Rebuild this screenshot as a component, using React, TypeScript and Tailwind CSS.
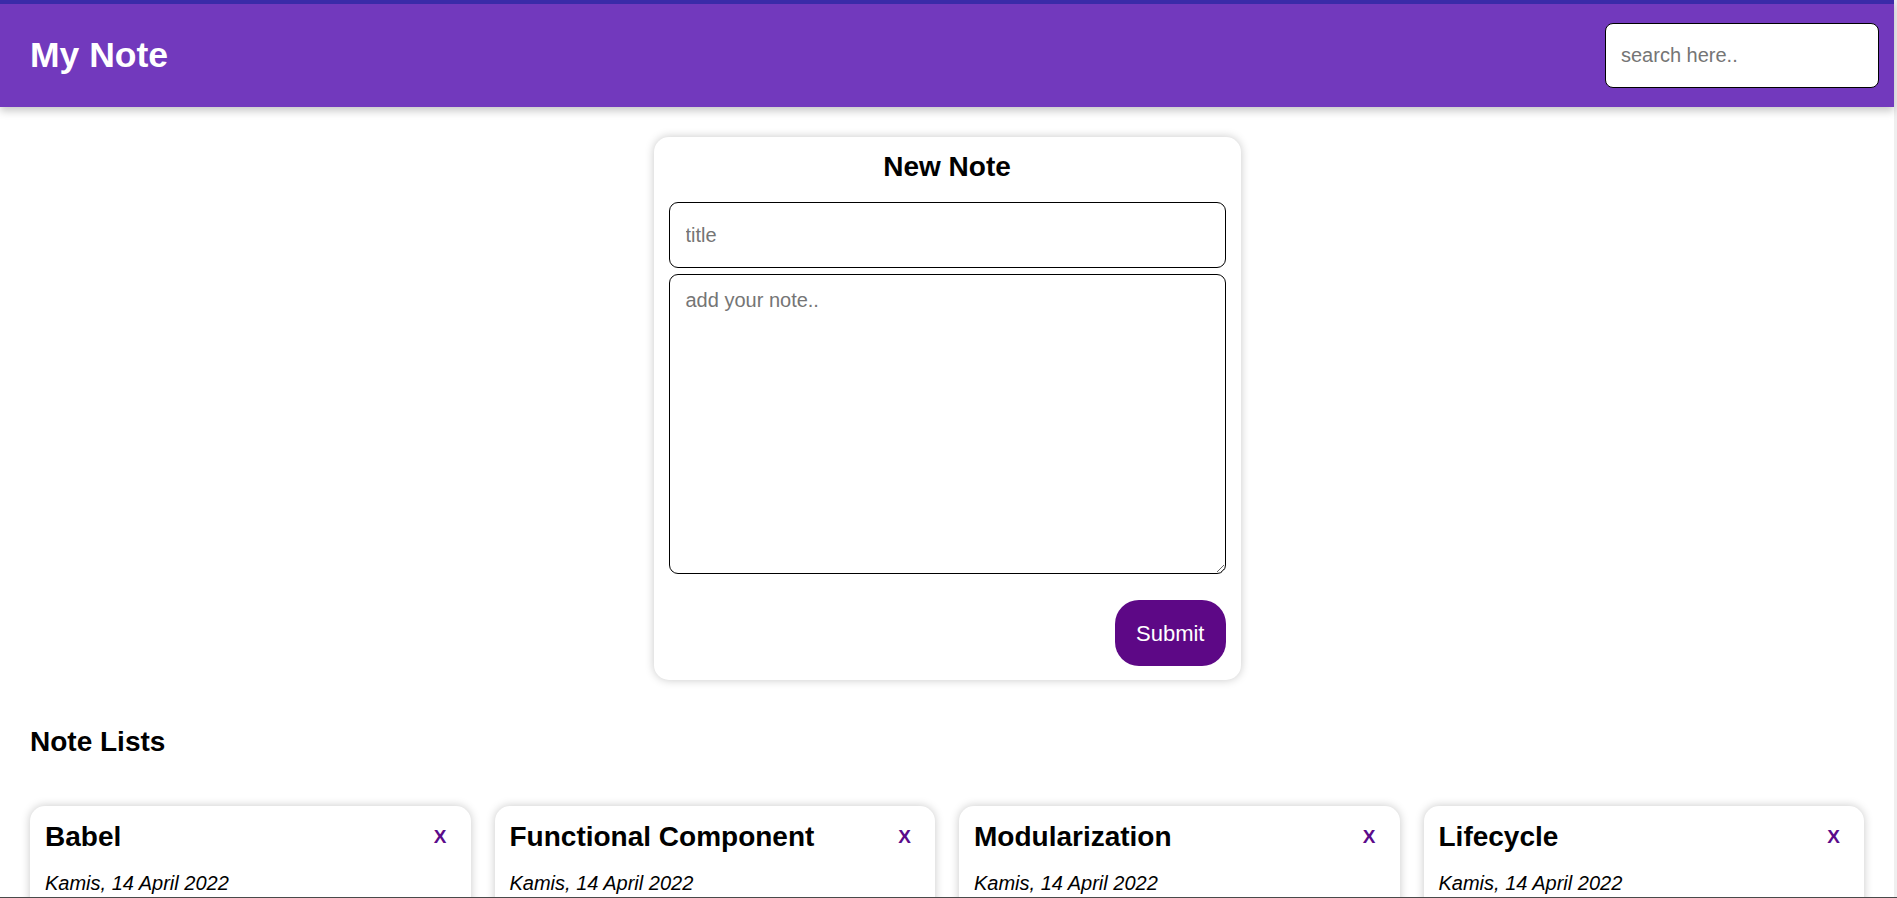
import React from "react";

const notes = [
  { title: "Babel", date: "Kamis, 14 April 2022", body: "Babel merupakan tools open-source yang digunakan untuk mengubah sintaks ECMAScript 2015+ menjadi sintaks yang didukung oleh JavaScript engine versi lama." },
  { title: "Functional Component", date: "Kamis, 14 April 2022", body: "Functional component merupakan React component yang dibuat menggunakan fungsi JavaScript." },
  { title: "Modularization", date: "Kamis, 14 April 2022", body: "Dalam konteks pemrograman JavaScript, modularization merupakan teknik dalam memecah atau menggunakan kode dalam berkas JavaScript secara terpisah." },
  { title: "Lifecycle", date: "Kamis, 14 April 2022", body: "Dalam konteks React component, lifecycle merupakan kumpulan method yang menjadi siklus hidup mulai dari component dibuat." },
];

export default function App() {
  return (
    <div
      className="w-full h-[898px] overflow-hidden flex flex-col bg-white border-b border-[#4a4a4a]"
      style={{ fontFamily: '"Liberation Sans", Arial, sans-serif' }}
    >
      <div className="flex-1 flex flex-col border-r-[3px] border-[#efefef] min-h-0">
        <header className="relative z-10 h-[107px] shrink-0 border-t-[4px] border-[#3b2ba8] bg-[#7239bd] shadow-[0_4px_8px_rgba(0,0,0,0.22)] flex items-center justify-between pl-[30px] pr-[15px]">
          <h1 className="text-white font-bold text-[35.5px] leading-[40px] -mt-[2px]">My Note</h1>
          <input
            type="text"
            placeholder="search here.."
            className="w-[274px] h-[65px] bg-white border border-black rounded-[8px] pl-[15px] text-[20px] text-black placeholder:text-[#757575] outline-none"
          />
        </header>

        <main className="flex flex-col px-[30px]">
          <div className="flex justify-center pt-[30px]">
            <form className="w-[587px] bg-white rounded-[15px] shadow-[0_0_10px_rgba(0,0,0,0.22)] px-[15px] pt-[14px] pb-[14px] flex flex-col">
              <h2 className="text-center font-bold text-[28px] leading-[32px] text-black mb-[19px]">New Note</h2>
              <input
                type="text"
                placeholder="title"
                className="h-[66px] border border-black rounded-[9px] pl-[16px] text-[20px] placeholder:text-[#757575] outline-none"
              />
              <textarea
                placeholder="add your note.."
                className="mt-[6px] h-[300px] border border-black rounded-[9px] pl-[16px] pt-[10px] text-[20px] placeholder:text-[#757575] outline-none"
              />
              <div className="flex justify-end mt-[26px]">
                <button
                  type="button"
                  className="h-[66px] px-[21px] rounded-[24px] bg-[#5d0886] text-white text-[22px]"
                >
                  Submit
                </button>
              </div>
            </form>
          </div>

          <h2 className="mt-[46px] font-bold text-[28px] leading-[32px] text-black">Note Lists</h2>

          <div className="grid grid-cols-4 gap-[24px] mt-[48px]">
            {notes.map((n) => (
              <div
                key={n.title}
                className="bg-white rounded-[15px] shadow-[0_0_10px_rgba(0,0,0,0.22)] px-[15px] pt-[15px] pb-[20px]"
              >
                <div className="flex items-center justify-between">
                  <h3 className="font-bold text-[28px] leading-[32px] text-black">{n.title}</h3>
                  <button type="button" className="mr-[9px] font-bold text-[19px] text-[#5b0b8a]">
                    X
                  </button>
                </div>
                <p className="mt-[19px] italic text-[20px] leading-[23px] text-black">{n.date}</p>
                <p className="mt-[16px] text-[20px] leading-[26px] text-black">{n.body}</p>
              </div>
            ))}
          </div>
        </main>
      </div>
    </div>
  );
}
